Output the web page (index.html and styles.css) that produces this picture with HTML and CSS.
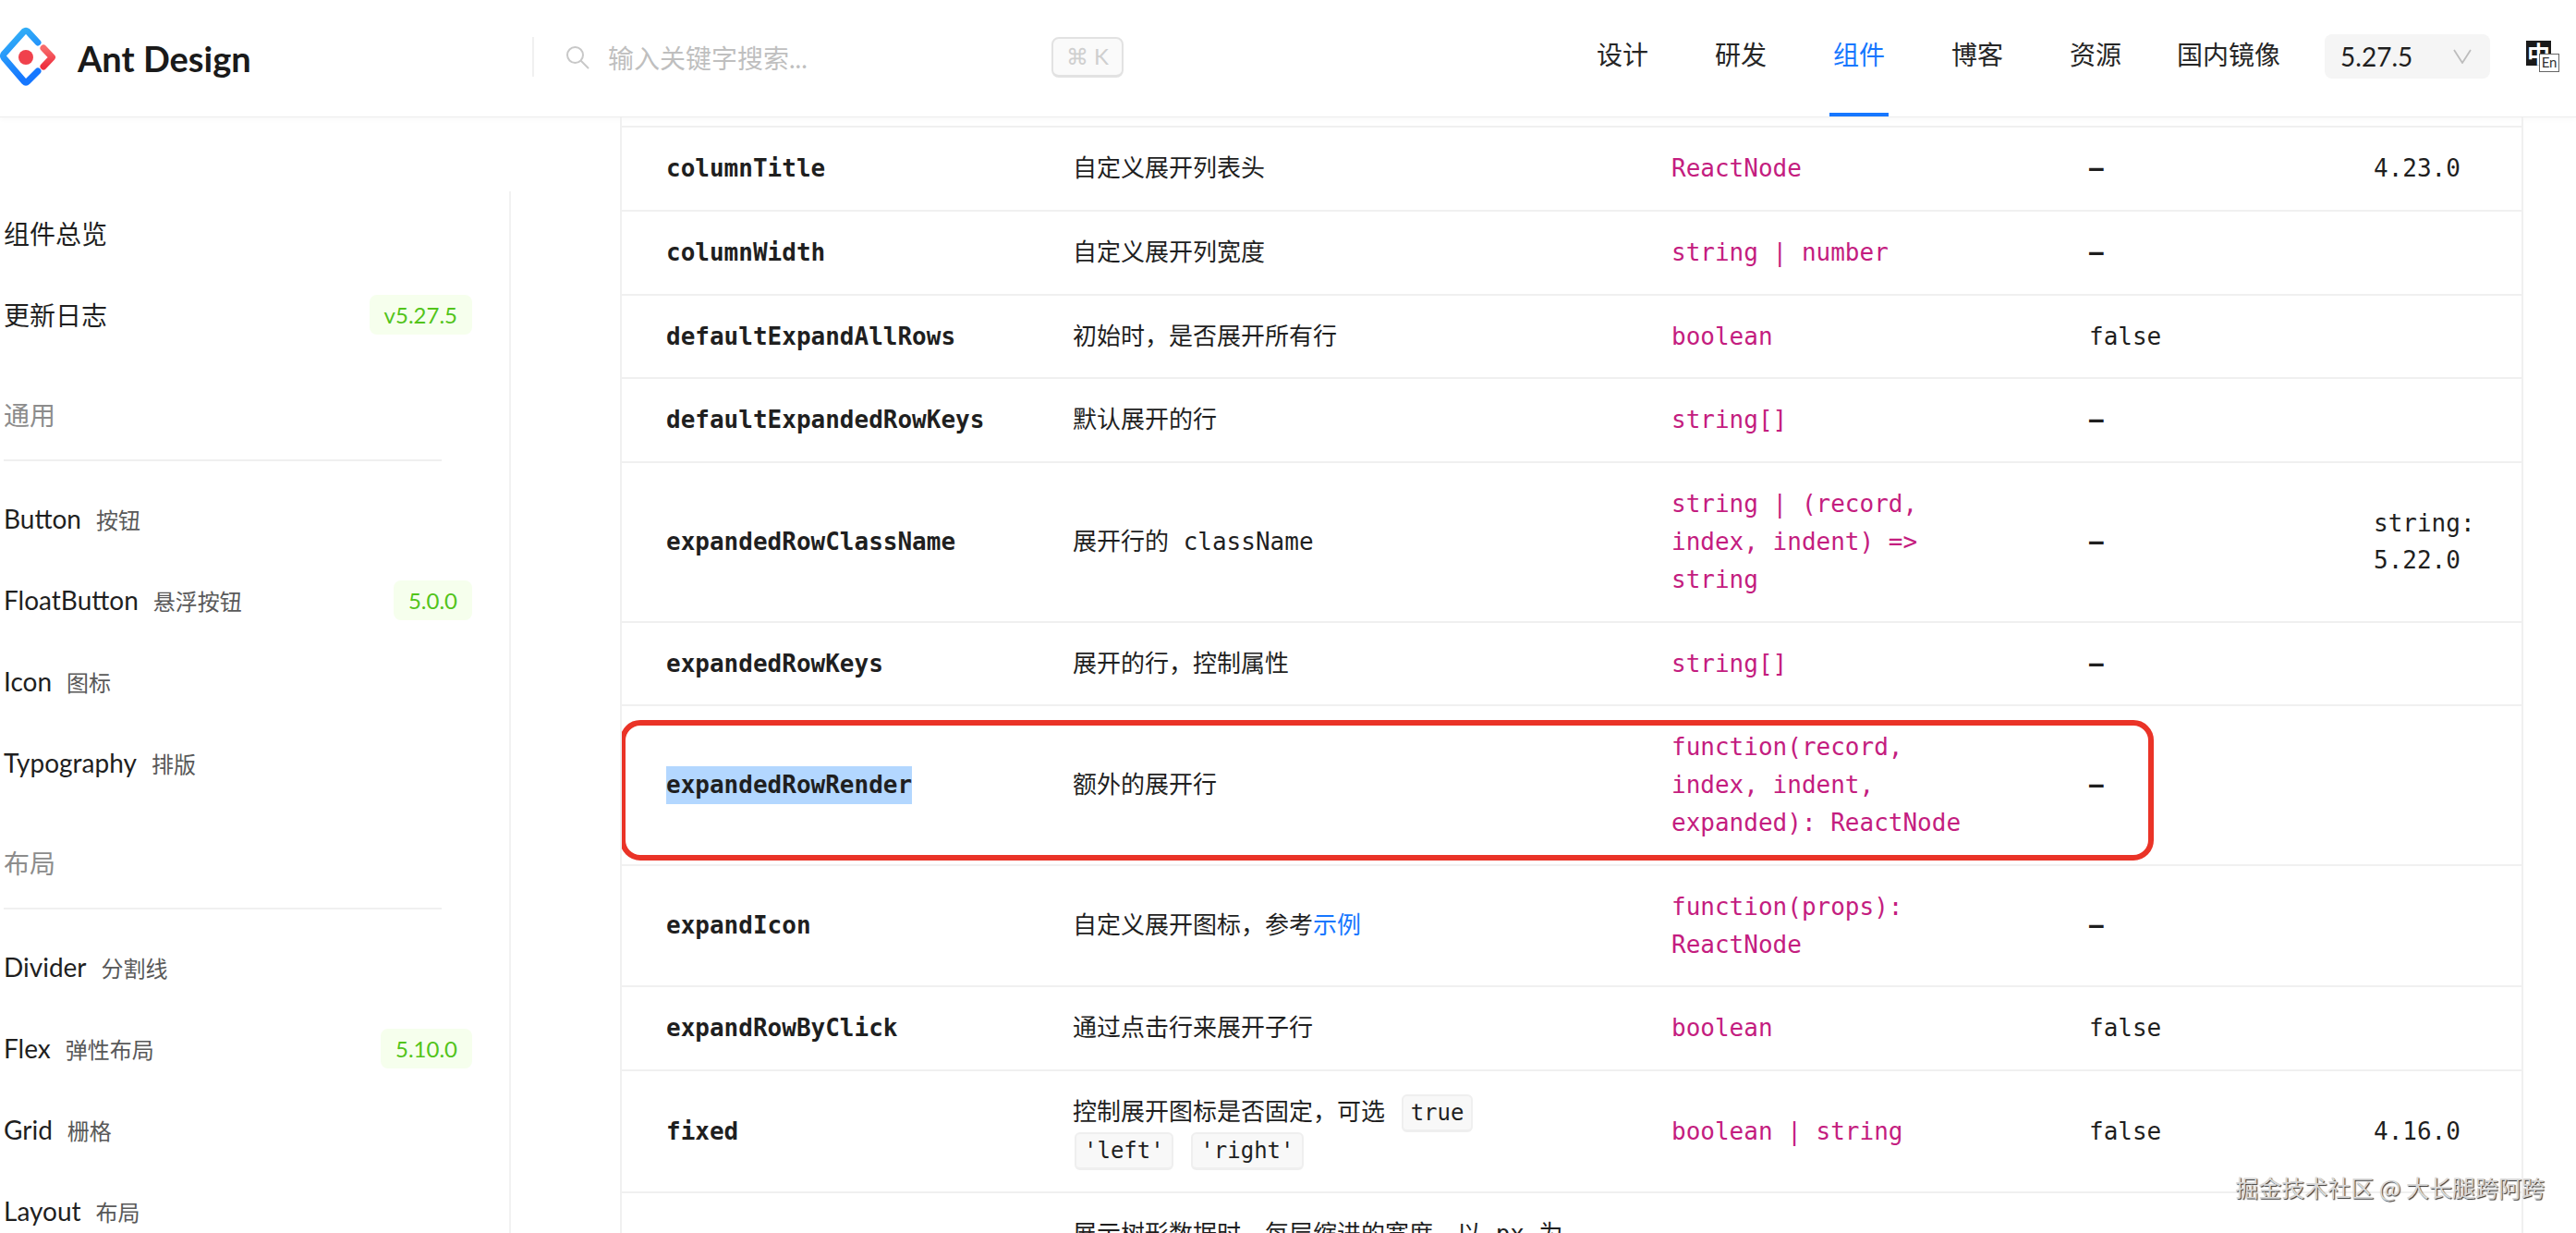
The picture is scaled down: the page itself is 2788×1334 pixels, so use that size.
FILE: index.html
```html
<!DOCTYPE html>
<html lang="zh">
<head>
<meta charset="utf-8">
<title>Ant Design</title>
<link rel="stylesheet" href="styles.css">
</head>
<body>
<header class="header">
  <div class="brand">
    <svg class="logo" viewBox="0 0 62 66" aria-hidden="true">
      <defs>
        <linearGradient id="lgBlue" x1="0" y1="0" x2="0.3" y2="1">
          <stop offset="0" stop-color="#35b5f5"/>
          <stop offset="1" stop-color="#1677ff"/>
        </linearGradient>
        <linearGradient id="lgRed" x1="0" y1="0" x2="0" y2="1">
          <stop offset="0" stop-color="#f76b6b"/>
          <stop offset="1" stop-color="#ee2f3f"/>
        </linearGradient>
      </defs>
      <path d="M41 17 L30 5 Q28 3.500 26 5 L4.500 29 Q2.500 31.500 4.500 34 L26 59 Q28 61 30 59 L41 48" fill="none" stroke="url(#lgBlue)" stroke-width="7" stroke-linecap="round" stroke-linejoin="round"/>
      <path d="M47 23 L56.500 33 L47 43" fill="none" stroke="url(#lgRed)" stroke-width="7" stroke-linecap="round" stroke-linejoin="round"/>
      <circle cx="28" cy="33" r="8" fill="#f0414c"/>
    </svg>
    <span class="brand-name">Ant Design</span>
  </div>
  <div class="search">
    <svg class="search-icon" viewBox="0 0 26 26" aria-hidden="true">
      <circle cx="10.500" cy="10.500" r="8.500" fill="none" stroke="#c8c8c8" stroke-width="2"/>
      <path d="M17 17 L24.500 24.500" stroke="#c8c8c8" stroke-width="2" stroke-linecap="round"/>
    </svg>
    <span class="search-text">输入关键字搜索...</span>
    <kbd class="search-key">⌘ K</kbd>
  </div>
  <nav class="nav">
    <a class="nav-item">设计</a>
    <a class="nav-item">研发</a>
    <a class="nav-item active">组件</a>
    <a class="nav-item">博客</a>
    <a class="nav-item">资源</a>
    <a class="nav-item last">国内镜像</a>
  </nav>
  <div class="version">
    <span>5.27.5</span>
    <svg class="chevron" viewBox="0 0 20 16" aria-hidden="true"><path d="M1 1 L10 15 L19 1" fill="none" stroke="#bdbdbd" stroke-width="1.800"/></svg>
  </div>
  <div class="lang"><span class="lang-zh">中</span><span class="lang-en">En</span></div>
</header>

<main class="main">
  <aside class="sidebar">
    <div class="item"><span class="label-cjk">组件总览</span></div>
    <div class="item"><span class="label-cjk">更新日志</span><span class="badge">v5.27.5</span></div>
    <div class="group">通用</div>
    <div class="item"><span class="name">Button<small>按钮</small></span></div>
    <div class="item"><span class="name">FloatButton<small>悬浮按钮</small></span><span class="badge">5.0.0</span></div>
    <div class="item"><span class="name">Icon<small>图标</small></span></div>
    <div class="item"><span class="name">Typography<small>排版</small></span></div>
    <div class="group">布局</div>
    <div class="item"><span class="name">Divider<small>分割线</small></span></div>
    <div class="item"><span class="name">Flex<small>弹性布局</small></span><span class="badge">5.10.0</span></div>
    <div class="item"><span class="name">Grid<small>栅格</small></span></div>
    <div class="item"><span class="name">Layout<small>布局</small></span></div>
  </aside>

  <section class="content">
    <table class="api">
      <colgroup>
        <col class="c-name"><col class="c-desc"><col class="c-type"><col class="c-def"><col class="c-ver">
      </colgroup>
      <tbody>
        <tr><td class="prop">columnTitle</td><td>自定义展开列表头</td><td class="type">ReactNode</td><td class="dash">–</td><td>4.23.0</td></tr>
        <tr><td class="prop">columnWidth</td><td>自定义展开列宽度</td><td class="type">string | number</td><td class="dash">–</td><td></td></tr>
        <tr><td class="prop">defaultExpandAllRows</td><td>初始时，是否展开所有行</td><td class="type">boolean</td><td>false</td><td></td></tr>
        <tr><td class="prop">defaultExpandedRowKeys</td><td>默认展开的行</td><td class="type">string[]</td><td class="dash">–</td><td></td></tr>
        <tr><td class="prop">expandedRowClassName</td><td>展开行的 className</td><td class="type">string | (record, index, indent) =&gt; string</td><td class="dash">–</td><td>string: 5.22.0</td></tr>
        <tr><td class="prop">expandedRowKeys</td><td>展开的行，控制属性</td><td class="type">string[]</td><td class="dash">–</td><td></td></tr>
        <tr><td class="prop"><span class="selected">expandedRowRender</span></td><td>额外的展开行</td><td class="type">function(record, index, indent, expanded): ReactNode</td><td class="dash">–</td><td></td></tr>
        <tr><td class="prop">expandIcon</td><td>自定义展开图标，参考<a class="link">示例</a></td><td class="type">function(props): ReactNode</td><td class="dash">–</td><td></td></tr>
        <tr><td class="prop">expandRowByClick</td><td>通过点击行来展开子行</td><td class="type">boolean</td><td>false</td><td></td></tr>
        <tr><td class="prop">fixed</td><td>控制展开图标是否固定，可选 <code>true</code> <code>'left'</code> <code>'right'</code></td><td class="type">boolean | string</td><td>false</td><td>4.16.0</td></tr>
        <tr><td class="prop">indentSize</td><td>展示树形数据时，每层缩进的宽度，以 px 为单位</td><td class="type">number</td><td>15</td><td></td></tr>
      </tbody>
    </table>
    <div class="callout"></div>
  </section>
</main>
<div class="watermark">掘金技术社区 @ 大长腿跨阿跨</div>
</body>
</html>
```

FILE: styles.css
```css
* { box-sizing: border-box; }
html { margin: 0; height: 1334px; overflow: hidden; }
body {
  position: relative;
  margin: 0;
  height: 1334px;
  overflow: hidden;
  background: #fff;
  color: #1f1f1f;
  font-family: Lato, "Noto Sans CJK SC", sans-serif;
  font-size: 28px;
}

/* header */
.header {
  display: flex;
  align-items: center;
  height: 127px;
  border-bottom: 1px solid #ececec;
  box-shadow: 0 2px 6px rgba(0, 0, 0, .03);
  background: #fff;
}
.brand {
  display: flex;
  align-items: center;
  width: 576px;
  flex: none;
  height: 100%;
}
.logo { width: 62px; height: 66px; margin-top: -2px; flex: none; }
.brand-name {
  margin-left: 22px;
  font-size: 38px;
  font-weight: 700;
  color: #1a1a1a;
}
.search {
  display: flex;
  align-items: center;
  width: 640px;
  height: 43px;
  margin-top: -3px;
  padding-left: 34px;
  border-left: 2px solid #f0f0f0;
  flex: none;
}
.search-icon { width: 26px; height: 26px; flex: none; }
.search-text { margin-left: 20px; width: 480px; color: #bfbfbf; font-size: 28px; flex: none; }
.search-key {
  display: flex;
  align-items: center;
  justify-content: center;
  width: 78px;
  height: 44px;
  flex: none;
  border: 2px solid #e2e2e2;
  border-bottom-width: 3px;
  border-radius: 8px;
  background: #fafafa;
  color: #cfcfcf;
  font-family: Lato, sans-serif;
  font-size: 24px;
}
.nav {
  display: flex;
  align-items: stretch;
  height: 100%;
  margin-left: 476px;
}
.nav-item {
  position: relative;
  display: flex;
  align-items: center;
  padding: 0 36px 10px;
  color: #262626;
}
.nav-item.last { padding: 0 24px 10px; }
.nav-item.active { color: #1677ff; }
.nav-item.active::after {
  content: "";
  position: absolute;
  left: 32px;
  right: 32px;
  bottom: 0;
  height: 4px;
  background: #1677ff;
}
.version {
  display: flex;
  align-items: center;
  width: 179px;
  height: 48px;
  margin-left: 24px;
  margin-top: -4px;
  padding-left: 17px;
  background: #f5f5f5;
  border-radius: 8px;
  font-size: 28px;
  flex: none;
}
.chevron { width: 20px; height: 16px; margin-left: 44px; }
.lang { position: relative; width: 36px; height: 34px; margin-left: 39px; margin-top: -4px; flex: none; }
.lang-zh {
  display: block;
  width: 27px;
  height: 27px;
  background: #1a1a1a;
  color: #fff;
  font: 700 25px/27px "Noto Sans CJK SC", sans-serif;
  text-align: center;
}
.lang-en {
  position: absolute;
  left: 14px;
  top: 14px;
  width: 22px;
  height: 20px;
  background: #fff;
  border: 1px solid #666;
  color: #333;
  font: 15px/17px Lato, sans-serif;
  text-align: center;
}

/* layout */
.main { display: flex; align-items: flex-start; height: 1207px; overflow: hidden; }

/* sidebar */
.sidebar {
  width: 553px;
  height: 1127px;
  margin-top: 80px;
  padding: 5px 40px 0 4px;
  border-right: 2px solid #f2f2f2;
  flex: none;
}
.item {
  display: flex;
  align-items: center;
  justify-content: space-between;
  height: 80px;
  margin-bottom: 8px;
}
.label-cjk { color: #1f1f1f; }
.name small { margin-left: 16px; font-size: 24px; color: #595959; }
.badge {
  height: 43px;
  padding: 0 16px;
  border-radius: 8px;
  background: #f6ffed;
  color: #52c41a;
  font-size: 24px;
  line-height: 43px;
}
.group {
  width: 474px;
  margin-top: 29px;
  height: 90px;
  line-height: 80px;
  color: #8c8c8c;
  border-bottom: 2px solid #f0f0f0;
  margin-bottom: 22px;
}

/* table */
.content {
  position: relative;
  width: 2060px;
  margin-left: 118px;
  height: 1207px;
  padding-top: 9px;
  border-left: 2px solid #f0f0f0;
  border-right: 2px solid #f0f0f0;
  flex: none;
  overflow: hidden;
}
.api {
  width: 2056px;
  table-layout: fixed;
  border-collapse: separate;
  border-spacing: 0;
  border-top: 2px solid #f0f0f0;
  font-family: "DejaVu Sans Mono", "Noto Sans CJK SC", monospace;
  font-size: 26px;
  line-height: 40.800px;
}
.c-name { width: 440px; }
.c-desc { width: 648px; }
.c-type { width: 452px; }
.c-def { width: 308px; }
.c-ver { width: 208px; }
.api td {
  padding: 24px 48px;
  border-bottom: 2px solid #f0f0f0;
  vertical-align: middle;
}
.api td.type { color: #c41d7f; }
.api td.prop { font-weight: 700; color: #1f1f1f; }
.api td.dash { font-weight: 700; }
.selected { display: inline-block; line-height: 41px; background: #b3d7ff; }
.link { color: #1677ff; }
code {
  margin: 0 2px;
  padding: 4px 8px;
  border: 2px solid #efefef;
  border-bottom-width: 3px;
  border-radius: 6px;
  background: #f8f8f8;
  font-family: "DejaVu Sans Mono", monospace;
  font-size: 24px;
  line-height: 30px;
}
.callout {
  position: absolute;
  left: -2px;
  top: 652px;
  width: 1660px;
  height: 152px;
  border: 6px solid #ea3327;
  border-radius: 22px;
  pointer-events: none;
}
.watermark {
  position: absolute;
  right: 34px;
  bottom: 35px;
  color: #d8d8d8;
  font-family: "Noto Sans CJK SC", sans-serif;
  font-size: 25px;
  line-height: 30px;
  text-shadow: 1px 1px 1px #333;
}
```
